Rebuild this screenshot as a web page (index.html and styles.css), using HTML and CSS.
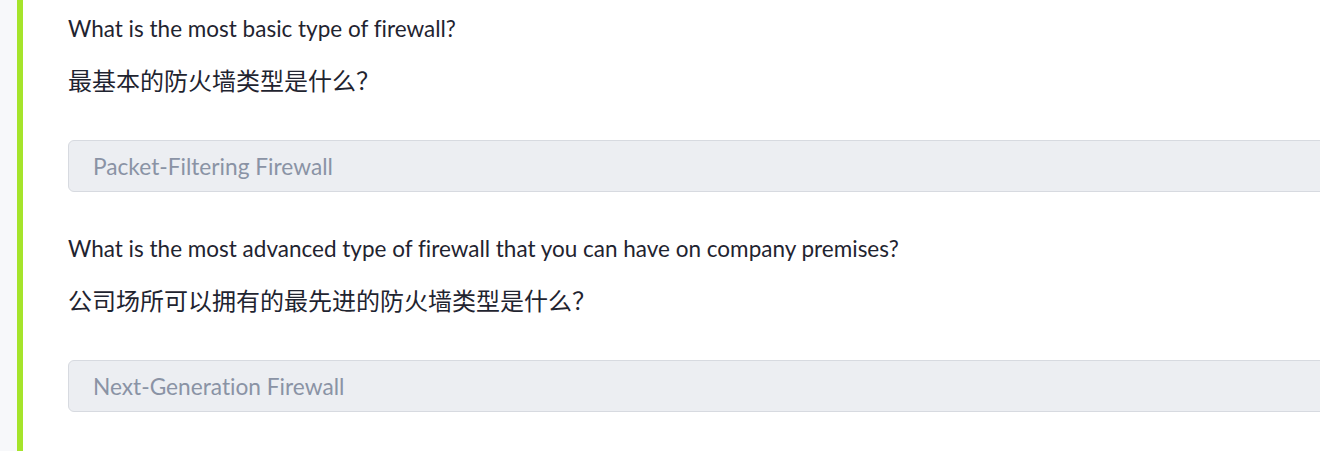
FILE: index.html
```html
<!DOCTYPE html>
<html lang="zh">
<head>
<meta charset="utf-8">
<title>Firewall questions</title>
<link rel="stylesheet" href="styles.css">
</head>
<body>
<div class="page">
  <div class="gutter"></div>
  <div class="accent"></div>
  <main class="content">
    <section class="question">
      <p class="q-en">What is the most basic type of firewall?</p>
      <p class="q-zh">最基本的防火墙类型是什么？</p>
      <div class="answer">Packet-Filtering Firewall</div>
    </section>
    <section class="question">
      <p class="q-en">What is the most advanced type of firewall that you can have on company premises?</p>
      <p class="q-zh">公司场所可以拥有的最先进的防火墙类型是什么？</p>
      <div class="answer">Next-Generation Firewall</div>
    </section>
  </main>
</div>
</body>
</html>
```

FILE: styles.css
```css
html, body {
  margin: 0;
  padding: 0;
  background: #ffffff;
  overflow: hidden;
}
.page {
  display: flex;
  width: 1320px;
  height: 451px;
  overflow: hidden;
}
.gutter {
  width: 17px;
  flex: none;
  background: #f7f8fa;
}
.accent {
  width: 6px;
  flex: none;
  background: #a5e42a;
}
.content {
  flex: none;
  width: 1300px;
  padding-left: 45px;
  display: flex;
  flex-direction: column;
}
.question {
  display: flex;
  flex-direction: column;
  height: 220px;
  flex: none;
}
.q-en {
  margin: 16px 0 0;
  font-family: "Lato", "Noto Sans", sans-serif;
  font-size: 22.5px;
  line-height: 26px;
  color: #1f2430;
  font-variant-ligatures: none;
}
.q-zh {
  margin: 22px 0 0;
  font-family: "Noto Sans CJK SC", sans-serif;
  font-size: 24px;
  line-height: 32px;
  color: #1f2430;
}
.answer {
  margin-top: 44px;
  height: 52px;
  box-sizing: border-box;
  border: 1px solid #d7dae0;
  border-radius: 6px;
  background: #eceef2;
  padding-left: 24px;
  display: flex;
  align-items: center;
  font-family: "Lato", "Noto Sans", sans-serif;
  font-size: 22.7px;
  color: #8a93a5;
  font-variant-ligatures: none;
}
```
